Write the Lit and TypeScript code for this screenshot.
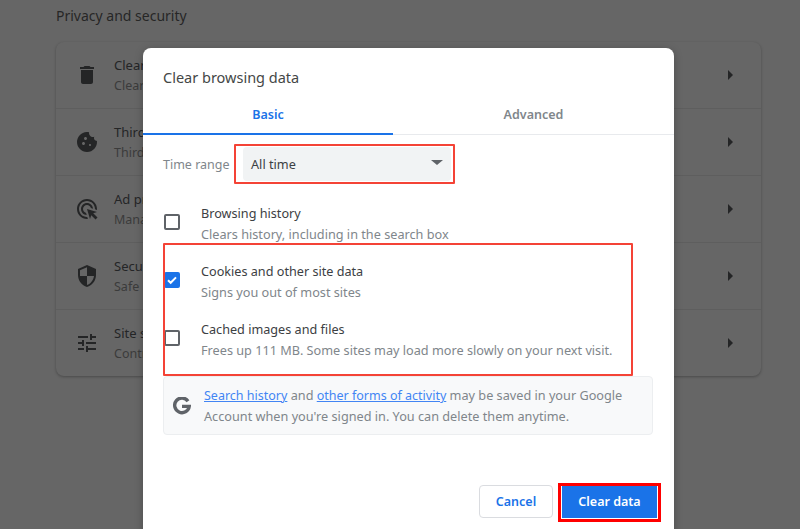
import { LitElement, html, css, svg } from "lit";
import { customElement } from "lit/decorators.js";

const ICONS = {
  trash: "M6 19c0 1.1.9 2 2 2h8c1.1 0 2-.9 2-2V7H6v12zM19 4h-3.5l-1-1h-5l-1 1H5v2h14V4z",
  cookie: "M21.95 10.99c-1.79-.03-3.7-1.95-2.68-4.22-2.98 1-5.77-1.59-5.19-4.56C6.95.71 2 6.58 2 12c0 5.52 4.48 10 10 10 5.89 0 10.54-5.08 9.95-11.01zM8.5 15c-.83 0-1.5-.67-1.5-1.5S7.67 12 8.5 12s1.5.67 1.5 1.5S9.33 15 8.5 15zm2-5C9.67 10 9 9.33 9 8.5S9.67 7 10.5 7s1.5.67 1.5 1.5-.67 1.5-1.5 1.5zm4.5 6c-.55 0-1-.45-1-1s.45-1 1-1 1 .45 1 1-.45 1-1 1z",
  ads: "M11.71 17.99C8.53 17.84 6 15.22 6 12c0-3.31 2.69-6 6-6 3.22 0 5.84 2.53 5.99 5.71l-2.1-.63C15.48 9.31 13.89 8 12 8c-2.21 0-4 1.79-4 4 0 1.89 1.31 3.48 3.08 3.89l.63 2.1zM22 12c0 .3-.01.6-.04.9l-1.97-.59c.01-.1.01-.21.01-.31 0-4.42-3.58-8-8-8s-8 3.58-8 8 3.58 8 8 8c.1 0 .21 0 .31-.01l.59 1.97c-.3.03-.6.04-.9.04-5.52 0-10-4.48-10-10S6.48 2 12 2s10 4.48 10 10zm-3.77 4.26L22 15l-10-3 3 10 1.26-3.77 4.27 4.27 1.98-1.98-4.28-4.26z",
  shield: "M12 1L3 5v6c0 5.55 3.84 10.74 9 12 5.16-1.26 9-6.45 9-12V5l-9-4zm0 10.99h7c-.53 4.12-3.28 7.79-7 8.94V12H5V6.3l7-3.11v8.8z",
  tune: "M3 17v2h6v-2H3zM3 5v2h10V5H3zm10 16v-2h8v-2h-8v-2h-2v6h2zM7 9v2H3v2h4v2h2V9H7zm14 4v-2H11v2h10zm-6-4h2V7h4V5h-4V3h-2v6z",
};

const ROWS = [
  { icon: ICONS.trash, title: "Clear br", sub: "Clear hi" },
  { icon: ICONS.cookie, title: "Third-p", sub: "Third-p" },
  { icon: ICONS.ads, title: "Ad priv", sub: "Manage" },
  { icon: ICONS.shield, title: "Security", sub: "Safe Br" },
  { icon: ICONS.tune, title: "Site set", sub: "Controls" },
];

const OPTIONS = [
  { title: "Browsing history", sub: "Clears history, including in the search box", checked: false },
  { title: "Cookies and other site data", sub: "Signs you out of most sites", checked: true },
  { title: "Cached images and files", sub: "Frees up 111 MB. Some sites may load more slowly on your next visit.", checked: false },
];

@customElement("app-root")
export class AppRoot extends LitElement {
  static styles = css`
    :host {
      display: block;
      position: relative;
      width: 800px;
      height: 529px;
      overflow: hidden;
      background: #666666;
      font-family: "Noto Sans", "Open Sans", sans-serif;
    }
    * { box-sizing: border-box; }
    .page { padding: 6px 39px 0 56px; }
    .heading { font-size: 14px; line-height: 19px; color: #262626; margin: 0 0 17px; font-weight: 400; }
    .card {
      border-radius: 8px;
      background: #666666;
      box-shadow: 0 1px 3px rgba(0,0,0,.28);
      display: flex;
      flex-direction: column;
    }
    .row {
      height: 67px;
      display: flex;
      align-items: center;
      padding: 0 26px 0 19px;
      border-top: 1px solid #5e5e5e;
    }
    .row:first-child { border-top: none; height: 66px; }
    .row-icon { width: 24px; height: 24px; fill: #242526; flex: none; }
    .row-text { flex: 1; margin-left: 15px; display: flex; flex-direction: column; gap: 3px; padding-top: 1px; }
    .row-title { font-size: 13px; line-height: 18px; color: #242526; }
    .row-sub { font-size: 12.5px; line-height: 18px; color: #3b3b3b; }
    .caret { width: 0; height: 0; margin-right: 2px; border-left: 5px solid #242526; border-top: 5px solid transparent; border-bottom: 5px solid transparent; }

    .dialog {
      position: absolute;
      left: 143px;
      top: 48px;
      width: 531px;
      height: 520px;
      background: #fff;
      border-radius: 8px;
      box-shadow: 0 2px 8px rgba(0,0,0,.25);
      display: flex;
      flex-direction: column;
    }
    .title { font-size: 14.5px; line-height: 20px; color: #444746; padding: 19px 20px 0; }
    .tabs { display: flex; margin-top: 9px; height: 39px; border-bottom: 1px solid #e8eaed; }
    .tab {
      display: flex; align-items: center; justify-content: center;
      font-size: 12.5px; font-weight: 600; color: #80868b;
      padding-bottom: 1px;
    }
    .tab.basic { width: 250px; color: #1a73e8; margin-bottom: -1px; border-bottom: 2px solid #1a73e8; }
    .tab.adv { flex: 1; }
    .body { padding: 12px 0 0 20px; display: flex; flex-direction: column; }
    .range { display: flex; align-items: center; gap: 13px; height: 34px; }
    .range-label { font-size: 12.5px; color: #80868b; width: 67px; }
    .select {
      width: 208px; height: 34px; background: #f1f3f4; border-radius: 4px;
      display: flex; align-items: center; justify-content: space-between;
      padding: 0 8px; font-size: 12.7px; color: #3c4043;
    }
    .arrow { width: 0; height: 0; border-top: 5px solid #5f6368; border-left: 6px solid transparent; border-right: 6px solid transparent; margin-bottom: 3px; }
    .options { margin-top: 13px; display: flex; flex-direction: column; }
    .option { height: 58px; display: flex; align-items: center; padding-left: 1px; }
    .check {
      width: 16px; height: 16px; border: 2px solid #5f6368; border-radius: 2px; flex: none;
      display: flex; align-items: center; justify-content: center; margin-top: -3px;
    }
    .check.on { background: #1a73e8; border-color: #1a73e8; }
    .check svg { width: 12px; height: 12px; fill: none; stroke: #fff; stroke-width: 2; }
    .opt-text { margin-left: 21px; display: flex; flex-direction: column; gap: 3px; }
    .opt-title { font-size: 12.65px; line-height: 18px; color: #3c4043; }
    .opt-sub { font-size: 12.7px; line-height: 18px; color: #80868b; }
    .info {
      margin-top: 8px; height: 59px; width: 490px;
      background: #f8f9fa; border: 1px solid #eceef0; border-radius: 4px;
      display: flex; align-items: center; padding: 1px 10px 0 9px;
    }
    .g { width: 18px; height: 18px; flex: none; fill: none; stroke: #5f6368; stroke-width: 3.4; }
    .info-text { margin-left: 13px; font-size: 12.7px; line-height: 21px; color: #80868b; white-space: nowrap; }
    .info-text a { color: #4285f4; text-decoration: underline; font-size: 12.5px; }
    .footer { display: flex; justify-content: flex-end; gap: 9px; margin-top: 50px; padding-right: 17px; }
    .btn {
      height: 33px; border-radius: 4px; font-family: inherit; font-size: 12.5px; font-weight: 600;
      display: flex; align-items: center; justify-content: center; padding: 0;
    }
    .cancel { width: 74px; background: #fff; color: #1a73e8; border: 1px solid #dadce0; }
    .clear { width: 95px; background: #1a73e8; color: #fff; border: none; border-radius: 0; }

    .mark { position: absolute; pointer-events: none; }
    .m1 { left: 234px; top: 144px; width: 221px; height: 40px; border: 2px solid #f44336; border-radius: 1px; }
    .m2 { left: 163px; top: 243px; width: 470px; height: 133px; border: 2px solid #f44336; border-radius: 1px; }
    .m3 { left: 558px; top: 483px; width: 103px; height: 39px; border: 3px solid #ff0000; }
  `;

  render() {
    return html`
      <div class="page">
        <h2 class="heading">Privacy and security</h2>
        <div class="card">
          ${ROWS.map(
            (r) => html`
              <div class="row">
                <svg class="row-icon" viewBox="0 0 24 24">${svg`<path d=${r.icon}></path>`}</svg>
                <div class="row-text">
                  <span class="row-title">${r.title}</span>
                  <span class="row-sub">${r.sub}</span>
                </div>
                <span class="caret"></span>
              </div>
            `
          )}
        </div>
      </div>

      <div class="dialog">
        <div class="title">Clear browsing data</div>
        <div class="tabs">
          <div class="tab basic">Basic</div>
          <div class="tab adv">Advanced</div>
        </div>
        <div class="body">
          <div class="range">
            <span class="range-label">Time range</span>
            <div class="select"><span>All time</span><span class="arrow"></span></div>
          </div>
          <div class="options">
            ${OPTIONS.map(
              (o) => html`
                <div class="option">
                  <span class="check ${o.checked ? "on" : ""}">
                    ${o.checked ? html`<svg viewBox="0 0 12 12"><path d="M2 6.2l2.7 2.6L10 3.4"></path></svg>` : ""}
                  </span>
                  <div class="opt-text">
                    <span class="opt-title">${o.title}</span>
                    <span class="opt-sub">${o.sub}</span>
                  </div>
                </div>
              `
            )}
          </div>
          <div class="info">
            <svg class="g" viewBox="0 0 18 18"><path d="M15 4.2A7.3 7.3 0 1 0 16.2 9.4H9"></path></svg>
            <div class="info-text">
              <a>Search history</a> and <a>other forms of activity</a> may be saved in your Google<br />
              Account when you're signed in. You can delete them anytime.
            </div>
          </div>
          <div class="footer">
            <button class="btn cancel">Cancel</button>
            <button class="btn clear">Clear data</button>
          </div>
        </div>
      </div>

      <div class="mark m1"></div>
      <div class="mark m2"></div>
      <div class="mark m3"></div>
    `;
  }
}
